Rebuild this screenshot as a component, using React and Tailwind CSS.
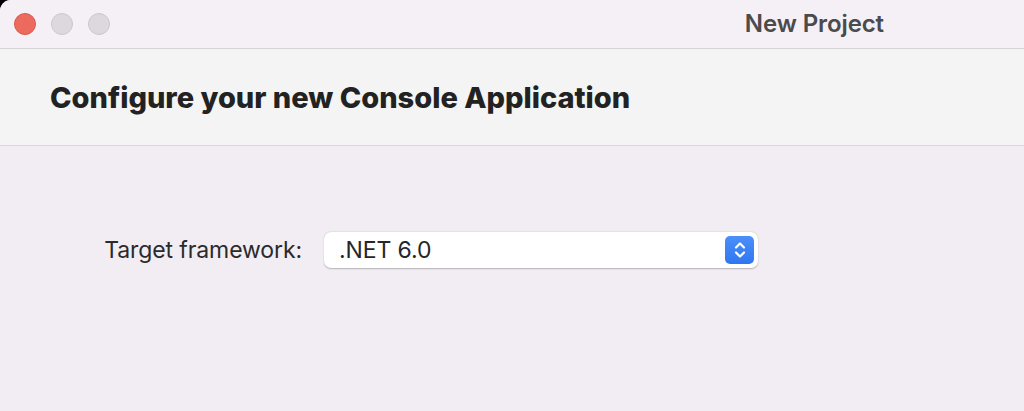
import React from "react";

export default function App() {
  return (
    <div
      className="w-[1024px] h-[411px] bg-black overflow-hidden"
      style={{ fontFamily: "Inter, 'Noto Sans', sans-serif" }}
    >
      <div className="w-full h-full rounded-tl-[11px] bg-[#f1edf3] flex flex-col overflow-hidden">
        {/* title bar */}
        <div className="h-[49px] shrink-0 bg-[#f5f0f6] border-b border-[#d6d3d7] flex items-center pl-[14px]">
          <div className="flex items-center gap-[15px]">
            <div className="w-[22px] h-[22px] rounded-full bg-[#ec6a5e] border border-[#d9574c]" />
            <div className="w-[22px] h-[22px] rounded-full bg-[#dcd8dd] border border-[#cbc7cc]" />
            <div className="w-[22px] h-[22px] rounded-full bg-[#dcd8dd] border border-[#cbc7cc]" />
          </div>
          <div className="ml-auto pr-[140px] text-[24px] font-semibold text-[#4b4a4c] tracking-[-0.1px] leading-none pb-[1px]">
            New Project
          </div>
        </div>
        {/* header band */}
        <div className="h-[97px] shrink-0 bg-[#f3f4f3] border-b border-[#d8d7d9] flex items-center pl-[50px]">
          <h1 className="text-[29px] font-extrabold text-[#222222] tracking-[0px] leading-none">
            Configure your new Console Application
          </h1>
        </div>
        {/* body */}
        <div className="flex-1 pt-[86px]">
          <div className="flex items-center">
            <div className="w-[302px] text-right text-[23px] text-[#2a2a2a] tracking-[-0.1px] leading-none">
              Target framework:
            </div>
            <div className="ml-[22px] w-[434px] h-[36px] bg-white rounded-[7px] shadow-[0_0.5px_1.5px_rgba(0,0,0,0.25)] flex items-center pl-[15px] pr-[4px]">
              <span className="text-[23px] text-[#262626] tracking-[-0.1px] leading-none">.NET 6.0</span>
              <div className="ml-auto w-[29px] h-[28px] rounded-[5px] bg-gradient-to-b from-[#4b8ff9] to-[#2f76f2] flex items-center justify-center">
                <svg width="14" height="20" viewBox="0 0 14 20" fill="none" stroke="white" strokeWidth="2.2" strokeLinecap="round" strokeLinejoin="round">
                  <path d="M3 7.5 L7 3.5 L11 7.5" />
                  <path d="M3 12.5 L7 16.5 L11 12.5" />
                </svg>
              </div>
            </div>
          </div>
        </div>
      </div>
    </div>
  );
}
